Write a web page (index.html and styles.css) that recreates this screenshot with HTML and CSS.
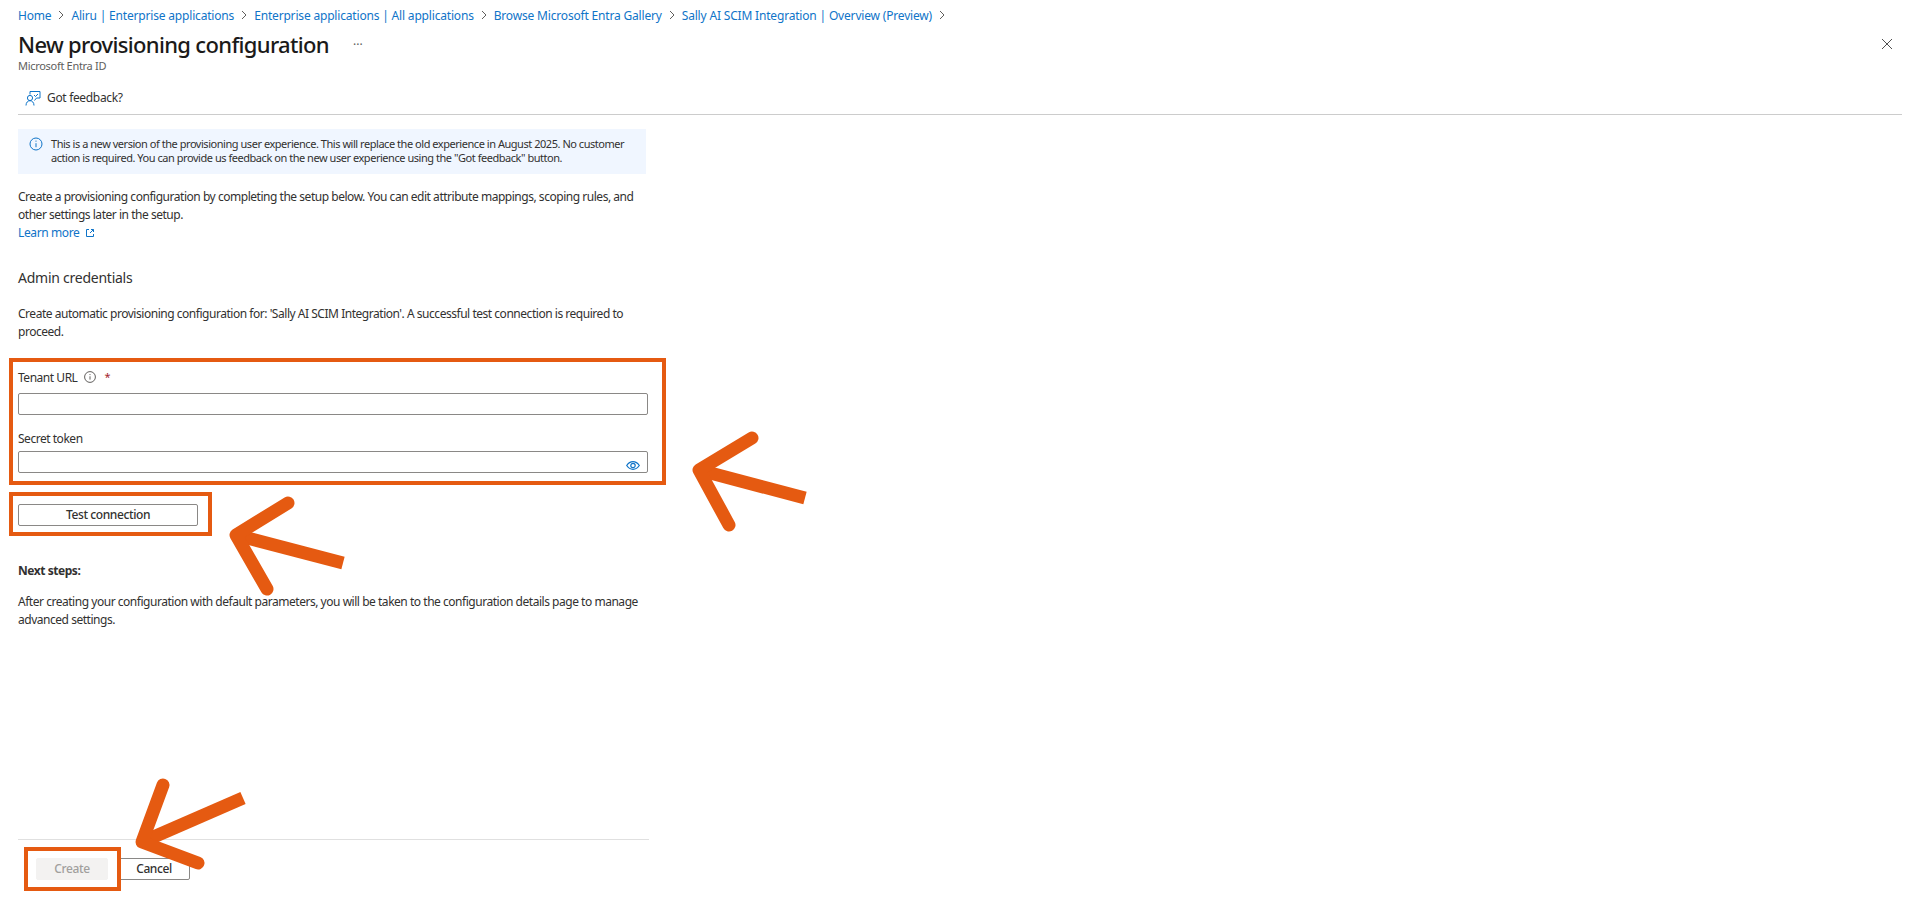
FILE: index.html
```html
<!DOCTYPE html>
<html lang="en">
<head>
<meta charset="utf-8">
<title>New provisioning configuration</title>
<link rel="stylesheet" href="styles.css">
</head>
<body>
<div class="page">
  <nav class="crumbs">
    <a>Home</a><svg class="chev" viewBox="0 0 8 10"><path d="M2 1l4 4-4 4"/></svg>
    <a>Aliru | Enterprise applications</a><svg class="chev" viewBox="0 0 8 10"><path d="M2 1l4 4-4 4"/></svg>
    <a>Enterprise applications | All applications</a><svg class="chev" viewBox="0 0 8 10"><path d="M2 1l4 4-4 4"/></svg>
    <a>Browse Microsoft Entra Gallery</a><svg class="chev" viewBox="0 0 8 10"><path d="M2 1l4 4-4 4"/></svg>
    <a>Sally AI SCIM Integration | Overview (Preview)</a><svg class="chev" viewBox="0 0 8 10"><path d="M2 1l4 4-4 4"/></svg>
  </nav>
  <header class="title-row">
    <h1>New provisioning configuration</h1>
    <span class="more">&middot;&middot;&middot;</span>
    <svg class="close" viewBox="0 0 12 12"><path d="M1 1l10 10M11 1L1 11"/></svg>
  </header>
  <div class="subtitle">Microsoft Entra ID</div>
  <div class="toolbar">
    <svg class="fb-icon" viewBox="0 0 16 16"><path class="blue" d="M5 4.500V1.500h10V8h-3.500L9.500 10.500M9 5l1.500 1.500L13 4"/><circle class="blue" cx="5" cy="8" r="2.600"/><path class="blue" d="M1 15.500c0-3 1.800-4.800 4-4.800s4 1.800 4 4.800"/></svg>
    <span>Got feedback?</span>
  </div>
  <main class="content">
    <div class="banner">
      <svg class="info-lg" viewBox="0 0 14 14"><circle cx="7" cy="7" r="6"/><path d="M7 6.200v4M7 3.600v1.100"/></svg>
      <p>This is a new version of the provisioning user experience. This will replace the old experience in August 2025. No customer action is required. You can provide us feedback on the new user experience using the "Got feedback" button.</p>
    </div>
    <p class="intro">Create a provisioning configuration by completing the setup below. You can edit attribute mappings, scoping rules, and other settings later in the setup.<br>
      <a class="learn">Learn more<svg class="ext" viewBox="0 0 10 10"><path d="M4 1.500H1.500v7h7V6M6 1.500h2.500V4M8.500 1.500L5 5"/></svg></a></p>
    <h2>Admin credentials</h2>
    <p class="desc">Create automatic provisioning configuration for: 'Sally AI SCIM Integration'. A successful test connection is required to proceed.</p>
    <label class="label first">Tenant URL<svg class="info-sm" viewBox="0 0 12 12"><circle cx="6" cy="6" r="5.400"/><path d="M6 5.300v3.300M6 3.100v1"/></svg><span class="req">*</span></label>
    <input class="field tenant" type="text">
    <label class="label second">Secret token</label>
    <div class="secret">
      <input class="field token" type="password">
      <svg class="eye" viewBox="0 0 14 9"><path d="M.7 4.500C2.500 1.800 4.600.7 7 .7s4.500 1.100 6.300 3.800C11.500 7.200 9.400 8.300 7 8.300S2.500 7.200.7 4.500z"/><circle cx="7" cy="4.500" r="2.200"/></svg>
    </div>
    <button class="btn test" type="button">Test connection</button>
    <h3>Next steps:</h3>
    <p class="after">After creating your configuration with default parameters, you will be taken to the configuration details page to manage advanced settings.</p>
    <footer class="actions">
      <button class="btn create" type="button" disabled>Create</button>
      <button class="btn cancel" type="button">Cancel</button>
    </footer>
  </main>
  <div class="mark mark-fields"></div>
  <div class="mark mark-test"></div>
  <div class="mark mark-create"></div>
  <svg class="arrows" viewBox="0 0 1919 913">
    <path class="shaft" d="M699 470L805 498"/>
    <path class="head" d="M752 438L699 470L729 525"/>
    <path class="shaft" d="M236 535L343 563"/>
    <path class="head" d="M288 503L236 535L267 589"/>
    <path class="shaft" d="M142 842L243 798"/>
    <path class="head" d="M163 785L142 842L198 863"/>
  </svg>
</div>
</body>
</html>
```
FILE: styles.css
```css
* { box-sizing: border-box; }
html, body { margin: 0; padding: 0; background: #fff; }
body { font-family: "Noto Sans", "Liberation Sans", sans-serif; font-size: 12px; color: #323130; }
p, h1, h2, h3 { margin: 0; font-weight: 400; }
a { color: #0f74c8; }
svg { fill: none; flex: none; }
.page { position: relative; width: 1919px; height: 913px; overflow: hidden; display: flex; flex-direction: column; padding: 0 17px 0 18px; }
.crumbs { height: 32px; padding-bottom: 2px; display: flex; align-items: center; gap: 5px; font-size: 12px; letter-spacing: -0.18px; }
.chev { width: 8px; height: 10px; stroke: #605e5c; stroke-width: 1; margin: 0 1px; }
.title-row { height: 24px; display: flex; align-items: center; }
h1 { font-size: 22px; font-weight: 500; line-height: 24px; color: #1b1a19; letter-spacing: -0.67px; }
.more { margin-left: 24px; font-size: 12px; color: #605e5c; }
.close { width: 12px; height: 12px; margin-left: auto; margin-right: 9px; stroke: #505050; stroke-width: 1; }
.subtitle { height: 20px; line-height: 20px; font-size: 11px; color: #605e5c; letter-spacing: -0.3px; }
.toolbar { margin-top: 6px; height: 33px; padding: 0 8px 1px 7px; display: flex; align-items: center; gap: 6px; border-bottom: 1px solid #ccc; letter-spacing: -0.33px; }
.fb-icon { width: 16px; height: 16px; stroke-width: 1; }
.blue { stroke: #0f74c8; }
.content { width: 631px; flex: 1; display: flex; flex-direction: column; }
.banner { margin-top: 14px; width: 628px; height: 45px; background: #f0f6ff; display: flex; padding: 8px 12px 0 11px; gap: 8px; }
.banner p { font-size: 11px; line-height: 14px; letter-spacing: -0.46px; }
.info-lg { width: 14px; height: 14px; stroke: #0f74c8; stroke-width: 1; }
.intro, .desc, .after { line-height: 18px; letter-spacing: -0.47px; width: 628px; }
.intro { margin-top: 14px; }
.learn { display: inline-flex; align-items: center; letter-spacing: -0.38px; }
.ext { width: 10px; height: 10px; margin-left: 6px; stroke: #0f74c8; stroke-width: 1; }
h2 { margin-top: 26px; height: 20px; line-height: 20px; font-size: 14px; letter-spacing: -0.25px; }
.desc { margin-top: 17px; }
.label { display: flex; align-items: center; height: 18px; letter-spacing: -0.47px; }
.first { margin-top: 27px; }
.second { margin-top: 14px; }
.info-sm { width: 12px; height: 12px; margin-left: 7px; stroke: #605e5c; stroke-width: 1; }
.req { margin-left: 8px; margin-top: -2px; font-size: 11px; color: #a4262c; }
.field { display: block; width: 630px; margin: 0; border: 1px solid #8a8886; border-radius: 2px; background: #fff; padding: 0 8px; font: inherit; }
.tenant { margin-top: 7px; height: 22px; }
.secret { position: relative; margin-top: 4px; }
.token { height: 22px; }
.eye { position: absolute; right: 9px; top: 10px; width: 14px; height: 9px; stroke: #0f74c8; stroke-width: 1.200; }
.btn { font: inherit; font-weight: 500; letter-spacing: -0.4px; border: 1px solid #8a8886; border-radius: 2px; background: #fff; color: #323130; padding: 0 0 2px; }
.test { margin-top: 31px; width: 180px; height: 22px; }
h3 { margin-top: 36px; height: 18px; line-height: 18px; font-size: 12px; font-weight: 700; letter-spacing: -0.45px; }
.after { margin-top: 13px; }
.actions { margin-top: auto; margin-bottom: 33px; padding: 18px 0 0 18px; border-top: 1px solid #e0e0e0; display: flex; gap: 10px; }
.create { width: 72px; height: 22px; background: #f3f2f1; border-color: #f3f2f1; color: #a19f9d; }
.cancel { width: 72px; height: 22px; }
.mark { position: absolute; border: 4px solid #e55a11; }
.mark-fields { left: 9px; top: 358px; width: 657px; height: 127px; }
.mark-test { left: 9px; top: 492px; width: 203px; height: 44px; }
.mark-create { left: 24px; top: 847px; width: 97px; height: 44px; }
.arrows { position: absolute; left: 0; top: 0; width: 1919px; height: 913px; stroke: #e55a11; stroke-width: 13; stroke-linejoin: round; pointer-events: none; }
.head { stroke-linecap: round; }
.shaft { stroke-linecap: butt; }
```
